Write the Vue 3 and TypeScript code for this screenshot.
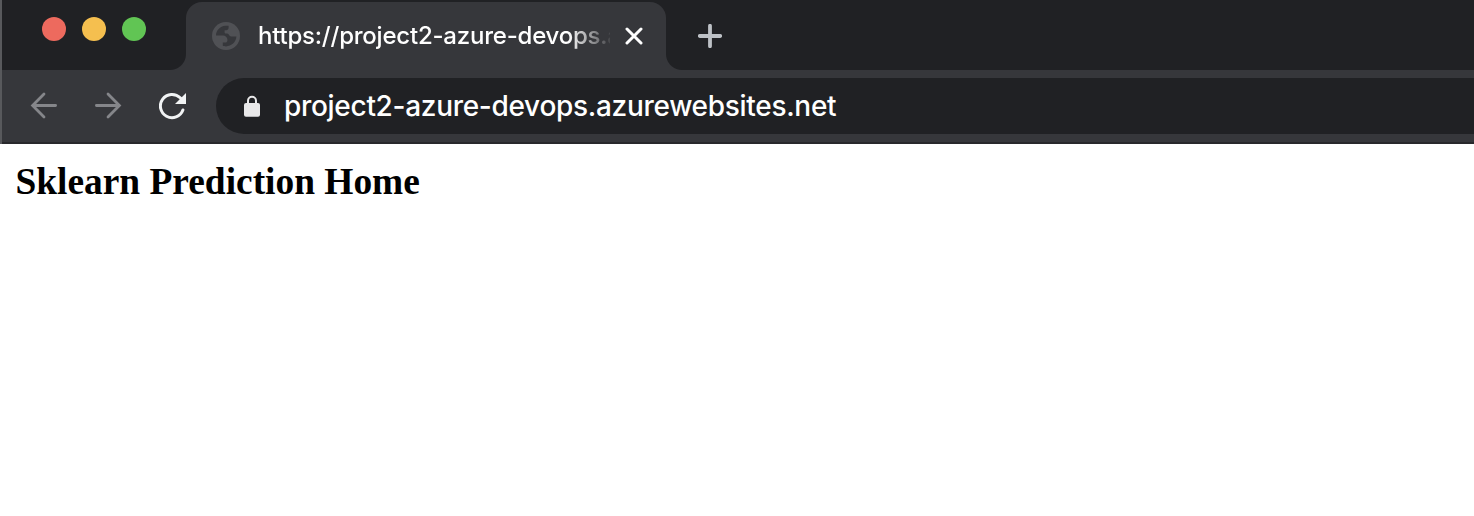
<script setup lang="ts">
const tabTitle = 'https://project2-azure-devops.a'
const address = 'project2-azure-devops.azurewebsites.net'
const lights = ['close', 'minimize', 'zoom']
</script>

<template>
  <div class="window">
    <header class="strip">
      <div class="lights">
        <i v-for="l in lights" :key="l" class="light" :class="l"></i>
      </div>
      <div class="tab">
        <svg class="globe" viewBox="0 0 28 28">
          <circle cx="14" cy="14" r="14" fill="#505155" />
          <path fill="#36373b" d="M4 13.5C4 8.5 8 4.2 13.3 3.8H16.6V5.8C16.6 7.2 15.6 8.2 14.2 8.2H12.6V10.2C12.6 11.2 13.2 11.6 14 11.6H15.2C17 11.6 17.2 14.6 19.2 14.6H24.4C24.2 20 19.5 24.4 14 24.4C12.6 24.4 11.8 24.2 10.8 23.8V20.6H13.2C14.6 20.6 15.4 19.6 15.4 18.4V17.6C15.4 15.4 13.2 13.6 11 13.6Z" />
        </svg>
        <span class="title">{{ tabTitle }}</span>
        <svg class="x" viewBox="0 0 18 18"><path d="M2 2L16 16M16 2L2 16" /></svg>
      </div>
      <svg class="plus" viewBox="0 0 24 24"><path d="M12 1.8V22.2M1.8 12H22.2" /></svg>
    </header>
    <nav class="toolbar">
      <svg class="arrow" viewBox="0 0 28 28"><path d="M25.6 13.5H3M14 2.1L2.6 13.5L14 24.9" /></svg>
      <svg class="arrow forward" viewBox="0 0 28 28"><path d="M2.4 13.5H25M14 2.1L25.4 13.5L14 24.9" /></svg>
      <svg class="reload" viewBox="0 0 28 28">
        <path class="ring" d="M23.9 18A11.6 11.6 0 1 1 21.2 5.8L23 7.6" />
        <path class="head" d="M27 1V12H16Z" />
      </svg>
      <div class="omnibox">
        <svg class="lock" viewBox="0 0 16 22">
          <path class="shackle" d="M4 9V5.8A4 4 0 0 1 12 5.8V9" />
          <rect y="8" width="16" height="13.8" rx="2" fill="#e8e8e9" />
        </svg>
        <span class="url">{{ address }}</span>
      </div>
    </nav>
    <main class="page"><h1>Sklearn Prediction Home</h1></main>
  </div>
</template>

<style>
body { margin: 0; background: #fff; }
</style>

<style scoped>
.window {
  position: relative;
  height: 516px;
  overflow: hidden;
  background: #fff;
}
.window::before {
  content: '';
  position: absolute;
  left: 0;
  top: 0;
  width: 2px;
  height: 144px;
  background: #58595c;
  z-index: 1;
}
svg { display: block; flex: none; fill: none; }
.strip {
  display: flex;
  height: 70px;
  background: #202124;
}
.lights {
  display: flex;
  gap: 16px;
  width: 144px;
  padding: 17px 0 0 42px;
}
.light {
  width: 24px;
  height: 24px;
  border-radius: 50%;
}
.close { background: #ed6a5e; }
.minimize { background: #f5bf4f; }
.zoom { background: #61c554; }
.tab {
  position: relative;
  box-sizing: border-box;
  display: flex;
  align-items: center;
  width: 480px;
  height: 68px;
  margin-top: 2px;
  padding-left: 26px;
  background: #36373b;
  border-radius: 16px 16px 0 0;
}
.tab::before,
.tab::after {
  content: '';
  position: absolute;
  bottom: 0;
  width: 16px;
  height: 16px;
}
.tab::before {
  left: -16px;
  background: radial-gradient(circle at 0 0, transparent 15.5px, #36373b 16.5px);
}
.tab::after {
  right: -16px;
  background: radial-gradient(circle at 100% 0, transparent 15.5px, #36373b 16.5px);
}
.globe { width: 28px; height: 28px; }
.title {
  width: 352px;
  margin-left: 18px;
  white-space: nowrap;
  color: #fff;
  font: 450 24px/32px Inter, sans-serif;
  letter-spacing: -0.22px;
  mask-image: linear-gradient(90deg, #000 310px, rgba(0, 0, 0, 0.08) 352px);
}
.x { width: 18px; height: 18px; margin-left: 15px; }
.x path { stroke: #fff; stroke-width: 3; stroke-linecap: round; }
.plus { width: 24px; height: 24px; margin: 24px 0 0 32px; }
.plus path { stroke: #bdc1c6; stroke-width: 3.8; stroke-linecap: round; }
.toolbar {
  box-sizing: border-box;
  display: flex;
  align-items: center;
  height: 74px;
  padding-left: 30px;
  background: #36373b;
  border-bottom: 2px solid #28292c;
}
.arrow { width: 28px; height: 28px; }
.forward { margin-left: 36px; }
.arrow path { stroke: #85868a; stroke-width: 2.8; stroke-linecap: round; }
.reload { width: 28px; height: 28px; margin-left: 37px; }
.ring { stroke: #f1f3f4; stroke-width: 3; stroke-linecap: round; }
.head { fill: #f1f3f4; }
.omnibox {
  display: flex;
  align-items: center;
  flex: 1;
  height: 56px;
  margin-left: 29px;
  padding-left: 28px;
  border-radius: 28px 0 0 28px;
  background: #202124;
}
.lock { width: 16px; height: 22px; }
.shackle { stroke: #e8e8e9; stroke-width: 2; }
.url {
  margin-left: 24px;
  white-space: nowrap;
  color: #fff;
  font: 450 28px/36px Inter, sans-serif;
  letter-spacing: -0.3px;
}
h1 {
  margin: 0;
  padding: 16px 0 0 15.5px;
  color: #000;
  font: 700 37.4px/44px "Liberation Serif", serif;
}
</style>
